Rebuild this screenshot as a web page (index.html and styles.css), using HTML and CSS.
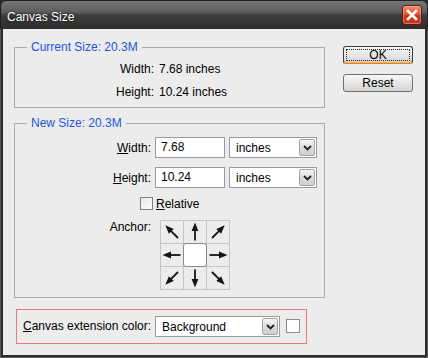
FILE: index.html
```html
<!DOCTYPE html>
<html>
<head>
<meta charset="utf-8">
<link rel="stylesheet" href="styles.css">
</head>
<body>
<div class="window">
  <div class="titlebar">
    <span class="title">Canvas Size</span>
    <span class="close"><svg width="12" height="12" viewBox="0 0 12 12"><path d="M2 2 L10 10 M10 2 L2 10" stroke="#fff" stroke-width="2.6" stroke-linecap="square"/></svg></span>
  </div>
  <div class="body">
    <div class="left">
      <fieldset class="group current">
        <legend>Current Size: 20.3M</legend>
        <div class="info">
          <span class="lbl">Width:</span><span>7.68 inches</span>
          <span class="lbl">Height:</span><span>10.24 inches</span>
        </div>
      </fieldset>
      <fieldset class="group new">
        <legend>New Size: 20.3M</legend>
        <div class="form">
          <span class="lbl"><u>W</u>idth:</span>
          <div class="input">7.68</div>
          <div class="select"><span>inches</span><span class="drop"><svg width="9" height="6" viewBox="0 0 9 6"><path d="M1 1 L4.5 4.5 L8 1" fill="none" stroke="#222" stroke-width="1.8"/></svg></span></div>
          <span class="lbl"><u>H</u>eight:</span>
          <div class="input">10.24</div>
          <div class="select"><span>inches</span><span class="drop"><svg width="9" height="6" viewBox="0 0 9 6"><path d="M1 1 L4.5 4.5 L8 1" fill="none" stroke="#222" stroke-width="1.8"/></svg></span></div>
        </div>
        <div class="relative"><span class="check"></span><span><u>R</u>elative</span></div>
        <div class="anchor">
          <span class="lbl">Anchor:</span>
          <div class="grid">
            <div class="cell"><svg viewBox="0 0 22 22"><g transform="rotate(-45 11 11)"><polygon points="11,1.5 7.6,10 14.4,10"/><rect x="10.1" y="9" width="1.8" height="10.5"/></g></svg></div>
            <div class="cell"><svg viewBox="0 0 22 22"><g><polygon points="11,1.5 7.6,10 14.4,10"/><rect x="10.1" y="9" width="1.8" height="10.5"/></g></svg></div>
            <div class="cell"><svg viewBox="0 0 22 22"><g transform="rotate(45 11 11)"><polygon points="11,1.5 7.6,10 14.4,10"/><rect x="10.1" y="9" width="1.8" height="10.5"/></g></svg></div>
            <div class="cell"><svg viewBox="0 0 22 22"><g transform="rotate(-90 11 11)"><polygon points="11,1.5 7.6,10 14.4,10"/><rect x="10.1" y="9" width="1.8" height="10.5"/></g></svg></div>
            <div class="cell center"></div>
            <div class="cell"><svg viewBox="0 0 22 22"><g transform="rotate(90 11 11)"><polygon points="11,1.5 7.6,10 14.4,10"/><rect x="10.1" y="9" width="1.8" height="10.5"/></g></svg></div>
            <div class="cell"><svg viewBox="0 0 22 22"><g transform="rotate(-135 11 11)"><polygon points="11,1.5 7.6,10 14.4,10"/><rect x="10.1" y="9" width="1.8" height="10.5"/></g></svg></div>
            <div class="cell"><svg viewBox="0 0 22 22"><g transform="rotate(180 11 11)"><polygon points="11,1.5 7.6,10 14.4,10"/><rect x="10.1" y="9" width="1.8" height="10.5"/></g></svg></div>
            <div class="cell"><svg viewBox="0 0 22 22"><g transform="rotate(135 11 11)"><polygon points="11,1.5 7.6,10 14.4,10"/><rect x="10.1" y="9" width="1.8" height="10.5"/></g></svg></div>
          </div>
        </div>
      </fieldset>
      <div class="ext">
        <span class="ext-label"><u>C</u>anvas extension color:</span>
        <div class="select wide"><span>Background</span><span class="drop"><svg width="9" height="6" viewBox="0 0 9 6"><path d="M1 1 L4.5 4.5 L8 1" fill="none" stroke="#222" stroke-width="1.8"/></svg></span></div>
        <span class="swatch"></span>
      </div>
    </div>
    <div class="right">
      <button class="btn ok">OK</button>
      <button class="btn">Reset</button>
    </div>
  </div>
</div>
</body>
</html>
```

FILE: styles.css
```css
* { box-sizing: border-box; }
html, body { margin: 0; padding: 0; background: #2a2a2a; }
body {
  font-family: "Liberation Sans", Arial, sans-serif;
  font-size: 12px;
  color: #000;
}
.window {
  width: 428px;
  height: 358px;
  background: #2b2b2b;
  border-radius: 6px 6px 0 0;
  display: flex;
  flex-direction: column;
  box-shadow: inset 1px 0 0 #5a5a5a, inset -1px 0 0 #5a5a5a, inset 0 -1px 0 #5a5a5a;
}
.titlebar {
  height: 29px;
  flex: none;
  display: flex;
  justify-content: space-between;
  align-items: flex-start;
  padding: 0 5px 0 6px;
  background: linear-gradient(#767676 0, #5e5e5e 40%, #3e3e3e 50%, #2c2c2c 100%);
  border: 1px solid #1e1e1e;
  border-bottom: none;
  border-radius: 6px 6px 0 0;
}
.title {
  color: #fff;
  font-size: 12px;
  line-height: 14px;
  margin-top: 9px;
  text-shadow: 0 0 3px rgba(0,0,0,0.8);
}
.close {
  width: 20px;
  height: 20px;
  margin-top: 4px;
  border-radius: 3px;
  border: 1px solid #5e1a0c;
  background: linear-gradient(#ec8a6c 0, #dd5a38 45%, #c8351a 55%, #c43a1e 100%);
  box-shadow: inset 0 0 0 1px rgba(255,255,255,0.3);
  display: flex;
  align-items: center;
  justify-content: center;
}
.close svg { display: block; }
.body {
  flex: 1;
  margin: 0 3px 3px;
  background: #ececec;
  display: flex;
}
.left {
  flex: none;
  width: 322px;
  padding-left: 11px;
}
.group {
  margin: 0;
  padding: 0;
  border: 1px solid #ababab;
  min-inline-size: 0;
}
.group legend {
  margin-left: 12px;
  padding: 0 4px;
  line-height: 14px;
  color: #1f55d8;
}
.current { margin-top: 11px; }
.info {
  display: grid;
  grid-template-columns: 139px auto;
  column-gap: 5px;
  line-height: 23px;
  padding: 4px 0 3px;
}
.lbl { text-align: right; }
.new { margin-top: 8px; }
.form {
  display: grid;
  grid-template-columns: 136px 70px 88px;
  grid-auto-rows: 21px;
  column-gap: 4px;
  row-gap: 9px;
  padding-top: 7px;
  align-items: center;
}
.input {
  height: 21px;
  border: 1px solid #9a9a9a;
  background: #fff;
  padding-left: 5px;
  line-height: 19px;
}
.select {
  height: 21px;
  border: 1px solid #9a9a9a;
  background: #fff;
  padding-left: 6px;
  display: flex;
  align-items: center;
  justify-content: space-between;
}
.drop {
  width: 16px;
  height: 17px;
  margin-right: 1px;
  border: 1px solid #a4a4a4;
  border-radius: 2px;
  background: linear-gradient(#f6f6f6, #dcdcdc 50%, #cfcfcf);
  display: flex;
  align-items: center;
  justify-content: center;
}
.drop svg { display: block; }
.relative {
  display: flex;
  align-items: center;
  gap: 3px;
  height: 13px;
  margin: 9px 0 0 125px;
}
.check {
  width: 13px;
  height: 13px;
  border: 1px solid #7f7f7f;
  background: linear-gradient(135deg, #e6e6e6, #fff);
}
.anchor {
  display: flex;
  align-items: flex-start;
  margin-top: 10px;
  padding-bottom: 7px;
}
.anchor .lbl {
  width: 136px;
  margin-right: 9px;
  line-height: 14px;
  margin-top: 0;
}
.grid {
  display: grid;
  grid-template-columns: repeat(3, 22px);
  grid-template-rows: repeat(3, 22px);
  gap: 1px;
  padding: 1px;
  width: 70px;
  height: 70px;
  background: #c4c4c4;
}
.cell {
  background: #ececec;
}
.cell svg {
  display: block;
  width: 22px;
  height: 22px;
  fill: #141414;
}
.cell.center {
  margin: -1px;
  background: #fff;
  border: 1px solid #8a8a8a;
  border-radius: 3px;
}
.ext {
  margin: 11px 0 0 2px;
  width: 291px;
  height: 35px;
  border: 1px solid #ee7878;
  padding: 6px 0 0 6px;
  display: flex;
  align-items: flex-start;
}
.ext-label {
  width: 132px;
  line-height: 21px;
}
.select.wide { width: 125px; }
.swatch {
  width: 14px;
  height: 14px;
  margin: 3px 0 0 6px;
  border: 1px solid #8c8c8c;
  background: #fff;
}
.right {
  margin-left: 18px;
  padding-top: 17px;
  display: flex;
  flex-direction: column;
  gap: 10px;
}
.btn {
  width: 70px;
  height: 18px;
  padding: 0;
  font-family: "Liberation Sans", Arial, sans-serif;
  font-size: 12px;
  line-height: 16px;
  color: #000;
  border: 1px solid #707070;
  border-radius: 3px;
  background: linear-gradient(#f8f8f8, #e6e6e6 50%, #d4d4d4);
}
.btn.ok {
  border-color: #3a3a3a;
  border-bottom-color: #e0801e;
  box-shadow: inset 0 -1px 0 #f4b060;
  outline: 1px dotted #222;
  outline-offset: -4px;
}
```
